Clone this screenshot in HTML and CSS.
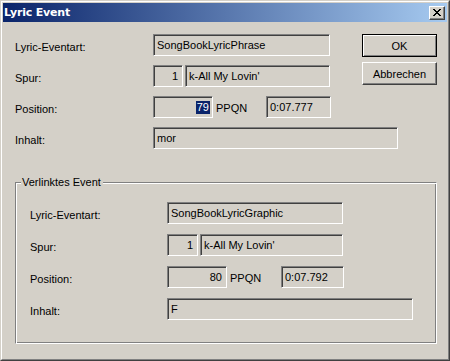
FILE: index.html
```html
<!DOCTYPE html>
<html>
<head>
<meta charset="utf-8">
<link rel="stylesheet" href="styles.css">
</head>
<body>
<div class="window">
  <div class="frame">
    <div class="titlebar">
      <span class="title">Lyric Event</span>
      <button class="close" type="button"><svg width="8" height="7" viewBox="0 0 8 7"><path fill="#000" d="M0 0h2v1h-2z M6 0h2v1h-2z M1 1h2v1h-2z M5 1h2v1h-2z M2 2h4v1h-4z M3 3h2v1h-2z M2 4h4v1h-4z M1 5h2v1h-2z M5 5h2v1h-2z M0 6h2v1h-2z M6 6h2v1h-2z"/></svg></button>
    </div>
    <div class="content">
      <div class="top-grid">
        <div class="lbl">Lyric-Eventart:</div>
        <div class="cell"><div class="field w-type">SongBookLyricPhrase</div></div>
        <div class="buttons">
          <button class="btn default" type="button">OK</button>
          <button class="btn" type="button">Abbrechen</button>
        </div>
        <div class="lbl">Spur:</div>
        <div class="cell"><div class="field num w-trk">1</div><div class="field w-name">k-All My Lovin'</div></div>
        <div class="lbl">Position:</div>
        <div class="cell tight"><div class="field num w-pos"><span class="sel">79</span></div><span class="unit t-unit">PPQN</span><div class="field w-time">0:07.777</div></div>
        <div class="lbl">Inhalt:</div>
        <div class="cell span2"><div class="field w-text">mor</div></div>
      </div>
      <fieldset class="group">
        <legend>Verlinktes Event</legend>
        <div class="group-grid">
          <div class="lbl">Lyric-Eventart:</div>
          <div class="cell"><div class="field g-type">SongBookLyricGraphic</div></div>
          <div class="lbl">Spur:</div>
          <div class="cell"><div class="field num g-trk">1</div><div class="field g-name">k-All My Lovin'</div></div>
          <div class="lbl">Position:</div>
          <div class="cell tight"><div class="field num g-pos">80</div><span class="unit g-unit">PPQN</span><div class="field g-time">0:07.792</div></div>
          <div class="lbl">Inhalt:</div>
          <div class="cell"><div class="field g-text">F</div></div>
        </div>
      </fieldset>
    </div>
  </div>
</div>
</body>
</html>
```
FILE: styles.css
```css
* { box-sizing: border-box; }
body {
  margin: 0;
  font-family: "Liberation Sans", Arial, sans-serif;
  font-size: 11px;
  color: #000;
}
.window {
  width: 450px;
  height: 361px;
  background: #d4d0c8;
  border: 1px solid;
  border-color: #d4d0c8 #404040 #404040 #d4d0c8;
}
.frame {
  height: 100%;
  border: 1px solid;
  border-color: #fff #808080 #808080 #fff;
  padding: 1px;
  display: flex;
  flex-direction: column;
}
.titlebar {
  height: 19px;
  flex: none;
  background: linear-gradient(to right, #0a246a, #a6caf0);
  display: flex;
  align-items: center;
  justify-content: space-between;
  padding: 0 2px 0 1px;
}
.title {
  color: #fff;
  font-family: "DejaVu Sans", sans-serif;
  font-weight: bold;
  font-size: 11px;
  letter-spacing: -0.2px;
}
.close {
  width: 16px;
  height: 14px;
  padding: 0;
  margin: 0;
  background: #d4d0c8;
  border: 1px solid;
  border-color: #fff #404040 #404040 #fff;
  box-shadow: inset -1px -1px #808080;
  display: flex;
  align-items: center;
  justify-content: center;
}
.close svg { display: block; }
.top-grid {
  display: grid;
  grid-template-columns: 138px 209px 75px;
  grid-template-rows: 22px 22px 22px 22px;
  row-gap: 9px;
  padding: 12px 0 0 12px;
}
.lbl {
  grid-column: 1;
  display: flex;
  align-items: center;
  padding-top: 3px;
  white-space: nowrap;
}
.cell {
  grid-column: 2;
  display: flex;
  align-items: center;
  gap: 2px;
}
.cell.tight { gap: 0; }
.span2 { grid-column: 2 / span 2; }
.buttons {
  grid-column: 3;
  grid-row: 1 / span 2;
  display: flex;
  flex-direction: column;
  gap: 5px;
}
.btn {
  width: 75px;
  height: 23px;
  margin: 0;
  padding: 0;
  font-family: "Liberation Sans", Arial, sans-serif;
  font-size: 11px;
  color: #000;
  background: #d4d0c8;
  border: 1px solid;
  border-color: #fff #404040 #404040 #fff;
  box-shadow: inset -1px -1px #808080;
}
.btn.default {
  border-color: #000;
  box-shadow: inset 1px 1px #fff, inset -1px -1px #808080;
}
.field {
  height: 22px;
  flex: none;
  display: flex;
  align-items: center;
  padding: 0 3px;
  white-space: nowrap;
  overflow: hidden;
  background: #d4d0c8;
  border: 1px solid;
  border-color: #808080 #fff #fff #808080;
  box-shadow: inset 1px 1px #404040;
}
.field.num { justify-content: flex-end; padding-right: 4px; }
.sel {
  background: #0a246a;
  color: #fff;
  line-height: 13px;
  padding: 0 1px;
  margin-right: -2px;
}
.unit {
  flex: none;
  padding-top: 2px;
}
.t-unit { width: 53px; padding-left: 3px; }
.w-type { width: 177px; }
.w-trk { width: 30px; }
.w-name { width: 145px; }
.w-pos { width: 60px; }
.w-time { width: 65px; }
.w-text { width: 245px; }
.group {
  margin: 27px 0 0 12px;
  padding: 0;
  min-width: 0;
  width: 422px;
  height: 168px;
  border: 1px solid;
  border-color: #808080 #fff #fff #808080;
  box-shadow: inset 1px 1px #fff, inset -1px -1px #808080;
}
.group legend {
  font-size: 11px;
  line-height: 13px;
  padding: 0 2px 0 1px;
  margin-left: 5px;
  background: #d4d0c8;
}
.group-grid {
  display: grid;
  grid-template-columns: 137px auto;
  grid-template-rows: 22px 22px 22px 22px;
  row-gap: 10px;
  padding: 13px 0 0 14px;
}
.g-type { width: 176px; }
.g-trk { width: 31px; }
.g-name { width: 143px; }
.g-pos { width: 60px; }
.g-unit { width: 54px; padding-left: 3px; }
.g-time { width: 63px; }
.g-text { width: 246px; }
```
